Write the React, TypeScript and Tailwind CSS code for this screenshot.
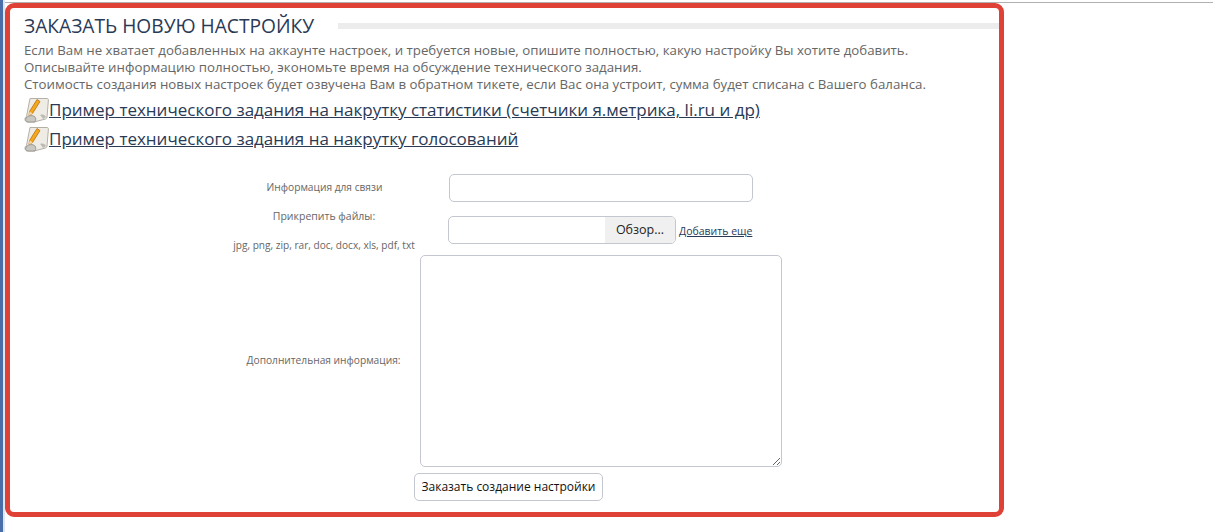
const pageFont = { fontFamily: '"Open Sans", "Noto Sans", sans-serif' };

function NoteIcon() {
  return (
    <svg width="26" height="26" viewBox="0 0 26 26" className="shrink-0">
      <path d="M6 1.5h17c1 0 1.5.6 1.4 1.6L23 20c-.1 1-.6 1.5-1.5 2L10 25H4c-2 0-3-1-3-3 0-1 .6-2 1.5-2.5L6 1.5z" fill="#efece6" stroke="#b4b0a6" strokeWidth="1" />
      <path d="M2 21c3-3 7-3 9-1 1 1 1 3 0 5H4c-2 0-3-2-2-4z" fill="#c9c7c1" stroke="#8f8d87" strokeWidth="0.8" />
      <path d="M16 18c3-1 5 0 6 2l-3 2c-1-2-2-3-3-4z" fill="#bdbab3" />
      <path d="M13 2.5l3 2-7.5 12-3.5 2 .5-4z" fill="#f4a81c" stroke="#b96f10" strokeWidth="0.8" />
      <path d="M5.5 14.5l3 2-3.5 2z" fill="#f6dcae" />
    </svg>
  );
}

function DocLink({ children }: { children: string }) {
  return (
    <div className="flex h-7 items-center">
      <NoteIcon />
      <a href="#" className="-ml-[1px] text-[17px] leading-6 text-[#2a3a55] underline">
        {children}
      </a>
    </div>
  );
}

export default function App() {
  return (
    <div className="flex h-[532px] w-[1213px] overflow-hidden bg-white" style={pageFont}>
      <div className="h-full w-[5px] shrink-0 border-l-[3px] border-[#4a6ea8] bg-[#dfe6f2]" />
      <div className="min-w-0 flex-1">
        <div className="h-[3px] border-b border-[#b0b0b0] bg-white" />
        <div className="h-[514px] w-[999px] rounded-[9px] border-[5px] border-[#df4137] pl-[14px] pt-[4px]">
          <div className="flex items-center">
            <h1 className="text-[19.2px] leading-7 font-normal text-[#2a3a55]">ЗАКАЗАТЬ НОВУЮ НАСТРОЙКУ</h1>
            <div className="ml-[24px] h-[6px] flex-1 bg-[#ececec]" />
          </div>
          <div className="mt-[2px] text-[13.27px] leading-[17px] text-[#666666]">
            <p>Если Вам не хватает добавленных на аккаунте настроек, и требуется новые, опишите полностью, какую настройку Вы хотите добавить.</p>
            <p>Описывайте информацию полностью, экономьте время на обсуждение технического задания.</p>
            <p>Стоимость создания новых настроек будет озвучена Вам в обратном тикете, если Вас она устроит, сумма будет списана с Вашего баланса.</p>
          </div>
          <div className="mt-[3px] flex flex-col gap-[1px]">
            <DocLink>Пример технического задания на накрутку статистики (счетчики я.метрика, li.ru и др)</DocLink>
            <DocLink>Пример технического задания на накрутку голосований</DocLink>
          </div>

          <div className="mt-[21px] flex items-center">
            <label className="w-[425px] pl-[176px] text-center text-[10.2px] text-[#666666]">Информация для связи</label>
            <input className="h-[28px] w-[304px] rounded-[5px] border border-[#c4c7cf] bg-white" />
          </div>

          <div className="mt-[14px] flex h-[28px]">
            <div className="w-[424px] pl-[176px] text-center text-[#666666]">
              <div className="-mt-[7px] text-[10.5px] leading-[14px]">Прикрепить файлы:</div>
              <div className="mt-[15px] whitespace-nowrap text-[10.1px] leading-[14px]">jpg, png, zip, rar, doc, docx, xls, pdf, txt</div>
            </div>
            <div className="flex h-[28px] w-[228px] justify-end overflow-hidden rounded-[5px] border border-[#c4c7cf]">
              <span className="flex w-[70px] items-center justify-center bg-[#f0f0f0] text-[12.5px] text-[#222222]">Обзор...</span>
            </div>
            <a href="#" className="ml-[3px] mt-[7px] text-[10.5px] leading-[16px] text-[#2a3a55] underline">Добавить еще</a>
          </div>

          <div className="mt-[11px] flex items-center">
            <label className="w-[396px] pl-[203px] text-center text-[10.2px] text-[#666666]">Дополнительная информация:</label>
            <textarea className="h-[212px] w-[362px] rounded-[5px] border border-[#c4c7cf] bg-white" />
          </div>

          <button className="ml-[390px] mt-[6px] h-[28px] w-[189px] rounded-[5px] border border-[#c4c7cf] bg-white text-[12px] whitespace-nowrap text-[#111111]">
            Заказать создание настройки
          </button>
        </div>
      </div>
    </div>
  );
}
